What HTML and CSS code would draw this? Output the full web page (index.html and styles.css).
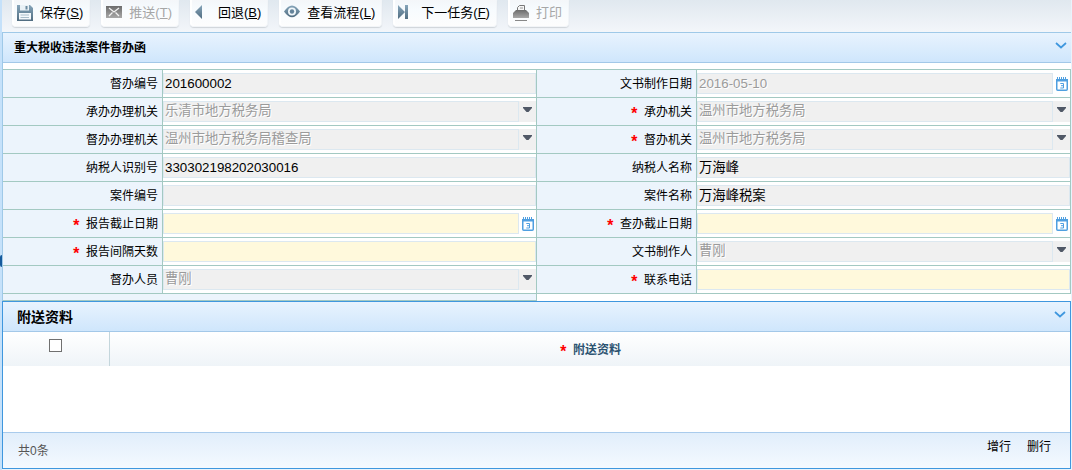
FILE: index.html
```html
<!DOCTYPE html>
<html lang="zh-CN">
<head>
<meta charset="utf-8">
<title>重大税收违法案件督办函</title>
<link rel="stylesheet" href="styles.css">
</head>
<body>
<svg width="0" height="0" class="sprites" aria-hidden="true">
  <defs>
    <linearGradient id="steel" x1="0" y1="0" x2="0" y2="1"><stop offset="0" stop-color="#86a5ba"/><stop offset="1" stop-color="#506c80"/></linearGradient>
    <linearGradient id="ash" x1="0" y1="0" x2="0" y2="1"><stop offset="0" stop-color="#6c6c6c"/><stop offset="1" stop-color="#a8a8a8"/></linearGradient>
    <symbol id="arrow" viewBox="0 0 9 5"><path d="M0 0H9V1L5.500 5H3.500L0 1Z" fill="#505866"/></symbol>
    <symbol id="chevron" viewBox="0 0 12 7"><path d="M1 1L6 5.500L11 1" fill="none" stroke="#3f97de" stroke-width="1.700"/></symbol>
    <symbol id="calendar" viewBox="0 0 12 14">
      <path d="M1 1H11" stroke="#4f9fe0" stroke-width="2" stroke-dasharray="1 1"/>
      <rect x=".75" y="2.750" width="10.500" height="10.500" rx="1" fill="#fff" stroke="#4f9fe0" stroke-width="1.500"/>
      <path d="M0 2H12V4.500H0Z" fill="#4f9fe0"/>
      <path d="M4.300 6.500H7.500V11H4.300M5 8.700H7.500" fill="none" stroke="#4f9fe0"/>
    </symbol>
  </defs>
</svg>
<main class="page">
  <span class="handle"></span>
  <nav class="toolbar">
    <button class="tool" type="button">
      <svg width="16" height="16" viewBox="0 0 16 16"><path d="M0 0H13L16 3V16H0Z" fill="url(#steel)"/><path d="M3 0H12V5.500H3Z" fill="#e9f1f6"/><path d="M8.500 1H10.500V4.500H8.500Z" fill="#6c8ba0"/><path d="M2 8H14V14.500H2Z" fill="#f4f9fc"/><path d="M3.500 10H12M3.500 12.500H12" stroke="#a9bdca"/></svg>
      <span>保存(<u>S</u>)</span></button>
    <button class="tool" type="button" disabled>
      <svg width="16" height="16" viewBox="0 0 16 16"><path d="M0 1H16V13H0Z" fill="url(#ash)"/><path d="M3 3L8 7L13 3M3 11L6.500 7.500M13 11L9.500 7.500" fill="none" stroke="#f2f2f2" stroke-width="1.300"/></svg>
      <span>推送(<u>T</u>)</span></button>
    <button class="tool" type="button">
      <svg width="16" height="16" viewBox="0 0 16 16"><path d="M7 0V14L0 7Z" fill="url(#steel)"/></svg>
      <span>回退(<u>B</u>)</span></button>
    <button class="tool" type="button">
      <svg width="16" height="16" viewBox="0 0 16 16"><path d="M0 6.500Q8-5.500 16 6.500Q8 18 0 6.500Z" fill="url(#steel)"/><circle cx="8" cy="6.500" r="4" fill="#f0f6fa"/><circle cx="8" cy="6.500" r="2.200" fill="#64839a"/></svg>
      <span>查看流程(<u>L</u>)</span></button>
    <button class="tool" type="button">
      <svg width="16" height="16" viewBox="0 0 16 16"><path d="M0 0L7 7L0 14Z M7 0H10V14H7Z" fill="url(#steel)"/></svg>
      <span>下一任务(<u>F</u>)</span></button>
    <button class="tool" type="button" disabled>
      <svg width="16" height="16" viewBox="0 0 16 16"><path d="M4.500 5V2.500L6.500.5H11.500V5" fill="#f5f5f5" stroke="#777"/><path d="M7 3H10" stroke="#999"/><path d="M3 5H13L16 8V13H0V8Z" fill="url(#ash)"/><path d="M2 15.500H14" stroke="#888"/></svg>
      <span>打印</span></button>
  </nav>

  <section class="panel">
    <header class="bar"><h1 class="title">重大税收违法案件督办函</h1>
      <button class="fold" type="button" aria-label="折叠"><svg width="12" height="7"><use href="#chevron"/></svg></button></header>
    <form class="form">
      <label class="label" for="f1">督办编号</label>
      <div class="field"><input class="box" id="f1" value="201600002" readonly></div>
      <label class="label" for="f2">文书制作日期</label>
      <div class="field"><input class="box" id="f2" value="2016-05-10" disabled><button class="side" type="button" aria-label="选择日期"><svg width="12" height="14"><use href="#calendar"/></svg></button></div>

      <label class="label" for="f3">承办办理机关</label>
      <div class="field"><select class="box" id="f3" disabled><option>乐清市地方税务局</option></select><span class="side drop"><svg width="9" height="5"><use href="#arrow"/></svg></span></div>
      <label class="label" for="f4"><b class="star">*</b>承办机关</label>
      <div class="field"><select class="box" id="f4" disabled><option>温州市地方税务局</option></select><span class="side drop"><svg width="9" height="5"><use href="#arrow"/></svg></span></div>

      <label class="label" for="f5">督办办理机关</label>
      <div class="field"><select class="box" id="f5" disabled><option>温州市地方税务局稽查局</option></select><span class="side drop"><svg width="9" height="5"><use href="#arrow"/></svg></span></div>
      <label class="label" for="f6"><b class="star">*</b>督办机关</label>
      <div class="field"><select class="box" id="f6" disabled><option>温州市地方税务局</option></select><span class="side drop"><svg width="9" height="5"><use href="#arrow"/></svg></span></div>

      <label class="label" for="f7">纳税人识别号</label>
      <div class="field"><input class="box" id="f7" value="330302198202030016" readonly></div>
      <label class="label" for="f8">纳税人名称</label>
      <div class="field"><input class="box han" id="f8" value="万海峰" readonly></div>

      <label class="label" for="f9">案件编号</label>
      <div class="field"><input class="box" id="f9" readonly></div>
      <label class="label" for="f10">案件名称</label>
      <div class="field"><input class="box han" id="f10" value="万海峰税案" readonly></div>

      <label class="label" for="f11"><b class="star">*</b>报告截止日期</label>
      <div class="field"><input class="box need" id="f11"><button class="side" type="button" aria-label="选择日期"><svg width="12" height="14"><use href="#calendar"/></svg></button></div>
      <label class="label" for="f12"><b class="star">*</b>查办截止日期</label>
      <div class="field"><input class="box need" id="f12"><button class="side" type="button" aria-label="选择日期"><svg width="12" height="14"><use href="#calendar"/></svg></button></div>

      <label class="label" for="f13"><b class="star">*</b>报告间隔天数</label>
      <div class="field"><input class="box need" id="f13"></div>
      <label class="label" for="f14">文书制作人</label>
      <div class="field"><select class="box" id="f14" disabled><option>曹刚</option></select><span class="side drop"><svg width="9" height="5"><use href="#arrow"/></svg></span></div>

      <label class="label" for="f15">督办人员</label>
      <div class="field"><select class="box" id="f15" disabled><option>曹刚</option></select><span class="side drop"><svg width="9" height="5"><use href="#arrow"/></svg></span></div>
      <label class="label" for="f16"><b class="star">*</b>联系电话</label>
      <div class="field"><input class="box need" id="f16"></div>
      <div class="rest"></div>
    </form>
  </section>

  <section class="attach">
    <header class="bar"><h2 class="title large">附送资料</h2>
      <button class="fold" type="button" aria-label="折叠"><svg width="12" height="7"><use href="#chevron"/></svg></button></header>
    <table class="grid">
      <thead><tr>
        <th class="pick"><input class="check" type="checkbox" aria-label="全选"></th>
        <th class="name"><span class="heading"><b class="star">*</b>附送资料</span></th>
      </tr></thead>
    </table>
    <footer class="foot">
      <span class="count">共0条</span>
      <span class="actions"><button class="act" type="button">增行</button><button class="act" type="button">删行</button></span>
    </footer>
  </section>
</main>
</body>
</html>
```
FILE: styles.css
```css
* { box-sizing: border-box; }

body {
  margin: 0;
  background: #e9f3fc;
  color: #000;
  font: 12px/16px "Liberation Sans", "Noto Sans CJK SC", sans-serif;
}

button {
  margin: 0;
  padding: 0;
  border: 0;
  background: none;
  color: inherit;
  font-family: inherit;
}

svg { display: block; flex: none; }
.sprites { position: absolute; }

.page {
  position: relative;
  display: flex;
  flex-direction: column;
  min-height: 100vh;
  padding: 0 1px 1px 0;
  border-left: 2px solid #c5e1fa;
}

.handle {
  position: absolute;
  left: -2px;
  top: 255px;
  width: 2px;
  height: 12px;
  border-radius: 2px 0 0 2px;
  background: #155a9c;
}

/* Toolbar */
.toolbar {
  display: flex;
  gap: 11px;
  height: 32px;
  padding-left: 10px;
  background: linear-gradient(#e0e8ef, #f3f6fa);
}

.tool {
  display: flex;
  align-items: center;
  gap: 7px;
  height: 27px;
  padding: 0 6px 0 5px;
  border: 1px solid #f2f5f8;
  border-width: 0 1px 1px 0;
  border-radius: 0 0 4px 4px;
  background: linear-gradient(#f3f6f9, #f7fbfe 35%, #fdfdfd);
  box-shadow: inset 2px 0 1px #fff, 0 1px 1px #cfd4d9;
  font-size: 13px;
  line-height: 18px;
  white-space: nowrap;
}

.tool:disabled { color: #a6a6a6; }

/* Panels */
.panel {
  border: 1px solid #9fc9e8;
  border-width: 1px 0 0 1px;
}

.bar {
  display: flex;
  align-items: center;
  justify-content: space-between;
  height: 30px;
  border-bottom: 1px solid #a3c8e8;
  background: linear-gradient(#e8f3fe, #cfe6fc);
}

.title { margin: 0; padding-left: 11px; font-size: 12px; font-weight: bold; }
.large { padding-left: 14px; font-size: 14px; }
.fold { padding: 0 4px 5px; }

/* Form */
.form {
  display: grid;
  grid-template-columns: 160px 1fr 160px 1fr;
  grid-template-rows: 1px repeat(8, 28px) 7px;
  padding-top: 6px;
  background: #fff;
}

.form::before {
  content: "";
  grid-column: 1 / -1;
  background: #a3c9c2;
}

.label, .field {
  display: flex;
  align-items: center;
  border: 1px solid #a3c9c2;
  border-width: 0 1px 1px 0;
}

.label {
  justify-content: flex-end;
  padding-right: 4px;
  background: #ecf4fc;
}

.star {
  margin-right: 5px;
  padding-top: 6px;
  color: #f00;
  font: bold 16px/16px "Liberation Mono", monospace;
}

.box {
  flex: 1;
  min-width: 0;
  height: 21px;
  margin: 0;
  padding: 0 1px;
  border: 1px solid #dce8f0;
  border-radius: 0;
  outline: 0;
  appearance: none;
  background: #f0f0f0;
  color: #000;
  font-family: "Liberation Sans", "Noto Sans CJK SC", sans-serif;
}

.box:disabled { color: #9b9b9b; opacity: 1; text-shadow: 1px 1px #fff; }
.han, select.box { padding-bottom: 2px; }
.need { background: #fff9dc; }

.side {
  display: flex;
  flex: none;
  align-items: center;
  justify-content: center;
  width: 17px;
  height: 21px;
}

.drop { padding-bottom: 4px; background: #f0f0f0; }

.rest {
  grid-column: 1 / 3;
  border: 1px solid #a3c9c2;
  border-width: 0 1px 1px 0;
  background: #ecf4fc;
}

/* Attachments */
.attach {
  display: flex;
  flex: 1;
  flex-direction: column;
  border: 1px solid #3f97de;
  background: #fff;
}

.grid {
  width: 100%;
  border-collapse: collapse;
  table-layout: fixed;
  background: linear-gradient(#fff, #eff4f8);
}

.grid th { height: 34px; padding: 0; }
.grid .pick { width: 106px; border-right: 1px solid #c4d6dc; }

.check {
  display: block;
  width: 13px;
  height: 13px;
  margin: 0 auto 8px;
  border: 1px solid #707070;
  appearance: none;
  background: #fff;
}

.name { color: #2c5371; }

.heading {
  display: flex;
  align-items: center;
  justify-content: center;
  padding-top: 2px;
}

.foot {
  display: flex;
  align-items: center;
  justify-content: space-between;
  height: 36px;
  margin-top: auto;
  padding: 0 19px 0 15px;
  border-top: 1px solid #a9cbec;
  background: linear-gradient(#e1eefb, #f4f9ff);
}

.count { color: #555; }
.actions { display: flex; gap: 16px; padding-bottom: 8px; }
.act { font-size: 12px; line-height: 16px; }
```
